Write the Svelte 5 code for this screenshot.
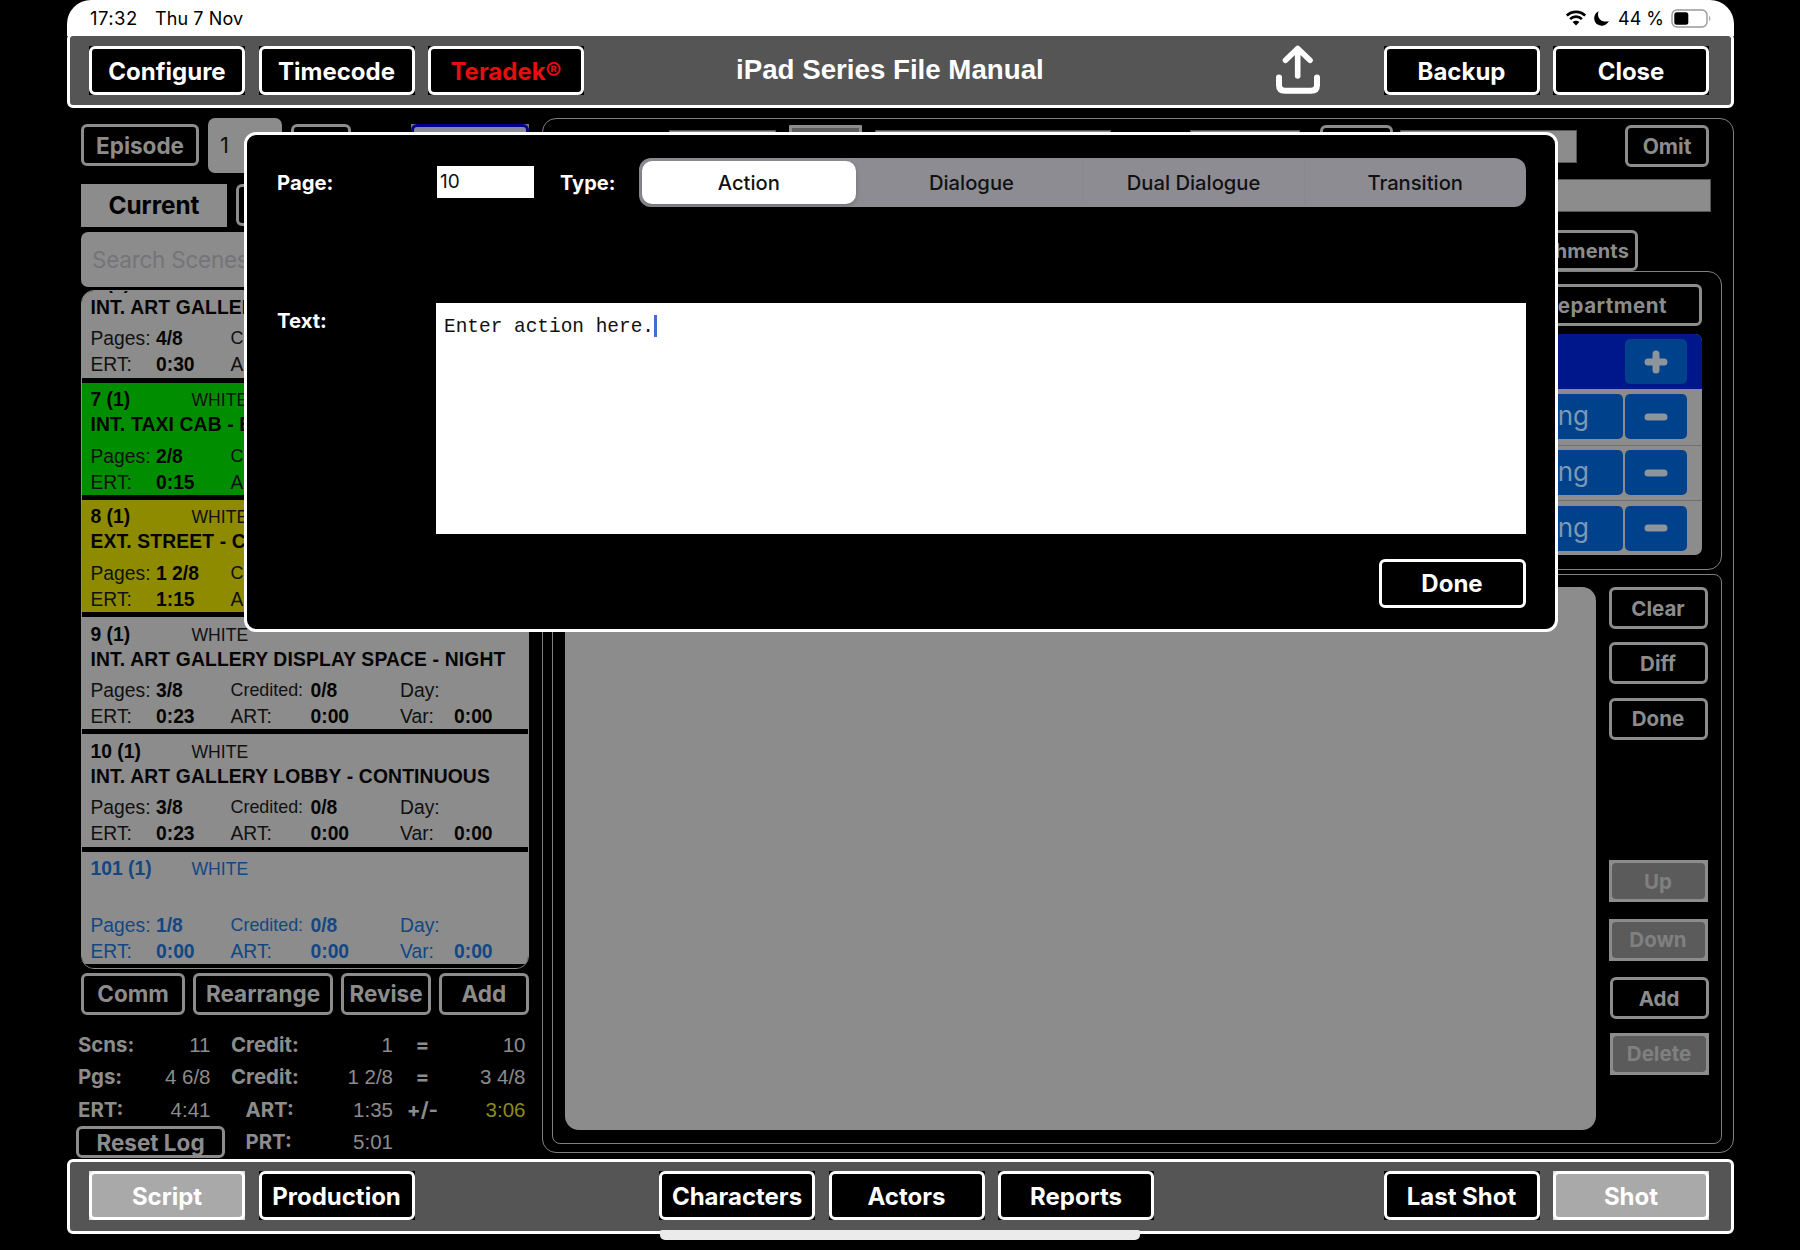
<script>
  const scenes = [
    { no: '6 (1)', tone: 'plain', title: 'INT. ART GALLERY', pages: '4/8', ert: '0:30' },
    { no: '7 (1)', tone: 'green', title: 'INT. TAXI CAB - EVENING', pages: '2/8', ert: '0:15' },
    { no: '8 (1)', tone: 'yellow', title: 'EXT. STREET - CONTINUOUS', pages: '1 2/8', ert: '1:15' },
    { no: '9 (1)', tone: 'plain', title: 'INT. ART GALLERY DISPLAY SPACE - NIGHT', pages: '3/8', ert: '0:23' },
    { no: '10 (1)', tone: 'plain', title: 'INT. ART GALLERY LOBBY - CONTINUOUS', pages: '3/8', ert: '0:23' },
    { no: '101 (1)', tone: 'blue', title: '', pages: '1/8', ert: '0:00' }
  ];
  const stats = [
    ['Scns:', '11', 'Credit:', '1', '=', '10'],
    ['Pgs:', '4 6/8', 'Credit:', '1 2/8', '=', '3 4/8'],
    ['ERT:', '4:41', 'ART:', '1:35', '+/-', '3:06']
  ];
  const types = ['Action', 'Dialogue', 'Dual Dialogue', 'Transition'];
  let active = $state('Action');
</script>

<div class="device">
  <div class="status">
    <span class="time">17:32</span><span class="date">Thu 7 Nov</span>
    <span class="grow"></span>
    <svg class="wifi" width="22" height="16" viewBox="0 0 22 16">
      <path d="M1.8 5.6a13.2 13.2 0 0 1 18.4 0M5.1 9.1a8.5 8.5 0 0 1 11.8 0" fill="none" stroke="#000" stroke-width="2.7" />
      <path d="M11 15.6 7.6 12a4.9 4.9 0 0 1 6.8 0z" />
    </svg>
    <svg class="moon" width="15" height="15" viewBox="0 0 15 15"><path d="M4.600 .2C-1 2.800 -1.200 10.600 3.600 13.600 7.600 16 12.800 14.400 14.900 10 7.600 12.200 2.200 7 4.600 .2z" /></svg>
    <span class="pct">44 %</span>
    <svg class="battery" width="41" height="19" viewBox="0 0 41 19">
      <rect x="1" y="1" width="35" height="17" rx="5" fill="none" stroke="#999" stroke-width="1.4" />
      <rect x="3.300" y="3.300" width="14" height="12.400" rx="2.500" />
      <path d="M38.200 6.500q2.400 3 0 6z" fill="#999" />
    </svg>
  </div>

  <header class="bar">
    <button class="btn">Configure</button>
    <button class="btn">Timecode</button>
    <button class="btn red">Teradek®</button>
    <h1>iPad Series File Manual</h1>
    <svg class="upload" width="44" height="50" viewBox="0 0 44 50" fill="none" stroke="#fff" stroke-linecap="round" stroke-linejoin="round">
      <path d="M21.700 31V4M9.500 15.300 21.700 3.500 34 15.300" stroke-width="5.600" />
      <path d="M3 32.500V40q0 5.800 6 5.800H35q6 0 6-5.800V32.500" stroke-width="6" />
    </svg>
    <button class="btn">Backup</button>
    <button class="btn">Close</button>
  </header>

  <main>
    <section class="left">
      <div class="episode">
        <button class="gbtn ep">Episode</button>
        <div class="epno">1</div>
        <button class="gbtn epx" aria-label="Episode options"></button>
        <div class="pickedbox"><div class="picked"></div></div>
      </div>
      <div class="tabs"><div class="current">Current</div><button class="gbtn other" aria-label="Other scenes"></button></div>
      <div class="search">Search Scenes</div>
      <div class="list">
        {#each scenes as s}
          <article class={s.tone}>
            <div class="head"><b>{s.no}</b><span>WHITE</span></div>
            <div class="title">{s.title}</div>
            <div class="cells">
              <span>Pages:</span><b>{s.pages}</b><span class="sm">Credited:</span><b>0/8</b><span>Day:</span><b></b>
            </div>
            <div class="cells">
              <span>ERT:</span><b>{s.ert}</b><span>ART:</span><b>0:00</b><span>Var:</span><b>0:00</b>
            </div>
          </article>
        {/each}
      </div>
      <div class="actions">
        <button class="gbtn">Comm</button><button class="gbtn">Rearrange</button><button class="gbtn">Revise</button><button class="gbtn">Add</button>
      </div>
      <div class="stats">
        {#each stats as r, i}
          <b>{r[0]}</b><span>{r[1]}</span><b class="mid" class:indent={i === 2}>{r[2]}</b><span>{r[3]}</span><b class="op">{r[4]}</b><span class:late={i === 2}>{r[5]}</span>
        {/each}
        <button class="gbtn reset">Reset Log</button><b class="mid indent">PRT:</b><span>5:01</span>
      </div>
    </section>

    <section class="right">
      <div class="form1">
        <i class="field w1"></i><i class="dim"></i><i class="field w2"></i><i class="field w3"></i>
        <button class="gbtn w4" aria-label="Scene option"></button><i class="field w5"></i>
        <button class="gbtn omit">Omit</button>
      </div>
      <div class="form2"><i class="field"></i></div>
      <div class="tabrow"><button class="gbtn">Attachments</button></div>
      <div class="panel breakdown">
        <button class="gbtn dept">Department</button>
        <div class="table">
          <div class="thead">
            <div class="sq"><svg width="24" height="24" viewBox="0 0 24 24"><path d="M12 4V20M4 12H20" /></svg></div>
          </div>
          {#each [1, 2, 3] as n}
            <div class="trow">
              <div class="missing">Missing</div>
              <div class="sq"><svg width="24" height="24" viewBox="0 0 24 24"><path d="M4 12H20" /></svg></div>
            </div>
          {/each}
        </div>
      </div>
      <div class="panel script">
        <div class="paper"></div>
        <div class="side">
          <button class="gbtn">Clear</button>
          <button class="gbtn">Diff</button>
          <button class="gbtn">Done</button>
          <button class="gbtn off up">Up</button>
          <button class="gbtn off down">Down</button>
          <button class="gbtn add">Add</button>
          <button class="gbtn off del">Delete</button>
        </div>
      </div>
    </section>
  </main>

  <footer class="bar">
    <button class="btn lit">Script</button>
    <button class="btn">Production</button>
    <button class="btn chars">Characters</button>
    <button class="btn">Actors</button>
    <button class="btn">Reports</button>
    <button class="btn last">Last Shot</button>
    <button class="btn lit">Shot</button>
  </footer>

  <div class="home"></div>

  <div class="modal">
    <div class="mrow">
      <span class="mlabel">Page:</span>
      <div class="page">10</div>
      <span class="tlabel">Type:</span>
      <div class="segments">
        {#each types as t}
          <button class:on={active === t} onclick={() => (active = t)}>{t}</button>
        {/each}
      </div>
    </div>
    <div class="mtext">
      <span class="mlabel">Text:</span>
      <div class="area">Enter action here.<i class="caret"></i></div>
    </div>
    <button class="gbtn done">Done</button>
  </div>
</div>

<style>
  :global(body) { background: #000; overflow: hidden; }
  * { box-sizing: border-box; }
  button { margin: 0; padding: 0; font-family: inherit; white-space: nowrap; }
  .device {
    position: relative; width: 1667px; height: 1250px; margin-left: 67px; color: #8c8c8c;
    font-family: Inter, 'Liberation Sans', sans-serif; display: flex; flex-direction: column;
  }
  .status {
    height: 36px; margin-bottom: -3px; flex: none; background: #fff; color: #000; display: flex; align-items: center;
    padding: 0 22px 0 23px; font-size: 18px; border-radius: 24px 24px 0 0;
  }
  .time { width: 65px; font-size: 18.500px; letter-spacing: .45px; }
  .date { letter-spacing: .1px; }
  .grow { flex: 1; }
  .wifi { margin-right: 7px; }
  .moon { margin-right: 9px; }
  .pct { width: 53px; }
  .bar {
    height: 75px; flex: none; border: 3px solid #fff; border-radius: 6px; background: #555;
    display: flex; align-items: center; gap: 13.500px; padding: 1px 22px 0 19px;
  }
  header.bar { height: 74.500px; margin-bottom: .5px; }
  .btn {
    position: relative; isolation: isolate; width: 156px; height: 49px; flex: none; border: 0; background: #000; color: #fff;
    font-size: 24px; font-weight: 700; letter-spacing: 0; padding-top: 2px;
  }
  .btn::before { content: ''; position: absolute; z-index: -1; inset: 0; border: 3px solid #fff; border-radius: 6px; }
  .btn.red { color: #e80d10; }
  .btn.lit { background: #dcdcdc; }
  .btn.lit::before { background: #a9a9a9; }
  h1 {
    margin: 0 0 0 138.500px; width: 308px; font: bold 27.700px 'Liberation Sans', Arial, sans-serif;
    color: #fff; white-space: nowrap; position: relative; top: -1px;
  }
  .upload { margin: 0 50px 2px auto; flex: none; }
  main { height: 1051px; flex: none; display: flex; }
  footer.bar { height: 75px; padding: 0 22px 2px 19px; }
  .chars { margin-left: 231px; }
  .last { margin-left: auto; }
  .home {
    position: absolute; left: 593px; top: 1230px; width: 480px; height: 10px; background: #ebebeb; border-radius: 2px 2px 5px 5px;
  }

  .gbtn {
    height: 42px; border: 3px solid #8c8c8c; border-radius: 6px; background: #000; color: #8c8c8c;
    font-size: 22.500px; font-weight: 700; flex: none;
  }
  .left { width: 475px; flex: none; padding: 9.500px 0 0 14px; }
  .episode { display: flex; height: 55px; align-items: center; }
  .ep { width: 118px; margin-right: 9px; }
  .epno {
    width: 74px; height: 55px; border-radius: 7px; background: #8c8c8c; color: #111; font-size: 22px;
    padding: 13px 0 0 12px; line-height: 28px; margin-right: 9px;
  }
  .epx { width: 60px; margin-right: 60px; }
  .pickedbox { width: 118px; height: 42px; background: #77777c; }
  .picked { height: 42px; border: 3px solid #00008b; border-radius: 6px; background: #88889a; }
  .tabs { display: flex; margin-top: 11px; gap: 9px; }
  .current {
    width: 146px; height: 43px; background: #8c8c8c; color: #000; font-size: 24.300px; font-weight: 700;
    text-align: center; line-height: 43px;
  }
  .other { width: 120px; }
  .search {
    width: 448px; height: 55px; margin-top: 5px; border-radius: 7px; background: #8c8c8c; color: #747478;
    font-size: 22.500px; line-height: 55px; padding-left: 11px; letter-spacing: -.25px;
  }
  .list {
    width: 448px; height: 679px; margin-top: 3px; border: solid #8c8c8c; border-width: 1px 1.500px 1px; border-radius: 13px; overflow: hidden;
    display: flex; flex-direction: column; justify-content: flex-end;
    font: 19.300px 'Liberation Sans', Arial, sans-serif; color: #111; background: #000;
  }
  article { height: 117.300px; flex: none; border-bottom: 5px solid #000; padding: 3.500px 0 0 8.500px; background: #8c8c8c; }
  article:last-child { margin-bottom: -1.500px; }
  article b { font-weight: 700; color: #050505; }
  article.green { background: #008e00; }
  article.yellow { background: #8e8b00; }
  article.blue, article.blue b { color: #124784; }
  .head { display: flex; height: 27px; line-height: 28px; }
  .head b { width: 101px; }
  .head span { font-size: 17.600px; }
  .title { height: 32.500px; line-height: 23px; font-weight: 700; white-space: nowrap; letter-spacing: .15px; color: #050505; }
  .cells { display: grid; grid-template-columns: 65.500px 74.500px 80px 89.500px 54px 70px; height: 26px; line-height: 21px; white-space: nowrap; }
  .sm { font-size: 17.900px; }
  .actions { display: flex; gap: 8px; margin-top: 4px; }
  .actions button:nth-child(1) { width: 104px; }
  .actions button:nth-child(2) { width: 140px; }
  .actions button:nth-child(3) { width: 90px; }
  .actions button:nth-child(4) { width: 89.500px; }
  .stats {
    display: grid; grid-template-columns: 60px 72.500px 90.500px 92px 50px 82.500px;
    grid-auto-rows: 32.600px; margin: 14px 0 0 -3px; width: 451px; line-height: 32.600px; font-size: 20.400px;
  }
  .stats b { font-weight: 700; white-space: nowrap; }
  .stats span { font-family: 'Liberation Sans', Arial, sans-serif; font-size: 20.500px; text-align: right; white-space: nowrap; }
  .mid { padding-left: 20.500px; }
  .indent { padding-left: 35px; }
  .op { text-align: center; padding-left: 9px; }
  .stats .late { color: #8b8b1c; }
  .reset { grid-column: span 2; width: 149px; height: 32px; margin-left: -2px; line-height: 25px; }

  .right { width: 1192px; height: 1035px; margin-top: 10px; border: 1.500px solid #808080; border-radius: 14px; padding: 6px 11px 0 8.500px; display: flex; flex-direction: column; }
  .form1 { display: flex; height: 44px; padding-left: 117px; align-items: flex-start; }
  .field { display: block; height: 33px; margin-top: 5px; background: #8c8c8c; border: 1.500px solid #555; flex: none; }
  .w1 { width: 107px; }
  .dim { width: 73px; height: 43px; margin: 0 13px 0 13.500px; border: 3px solid #8c8c8c; border-radius: 1px; background: #5c5c5c; flex: none; }
  .w2 { width: 236px; }
  .w3 { width: 110px; margin-left: 79px; }
  .w4 { width: 73px; margin: 0 7px 0 20px; }
  .w5 { width: 177px; }
  .omit { width: 84px; margin: 0 0 0 48px; font-size: 21px; }
  .form2 { display: flex; justify-content: flex-end; padding-right: 11px; margin-top: 4.500px; }
  .form2 .field { width: 400px; }
  .tabrow { display: flex; justify-content: flex-end; margin-top: 18.500px; padding-right: 84px; height: 41px; }
  .tabrow .gbtn { width: 170px; font-size: 20px; height: 41px; letter-spacing: .15px; text-align: right; padding-right: 6px; }
  .panel { border: 1.500px solid #808080; }
  .breakdown { height: 299px; border-radius: 14px; background: #000; padding: 12px 19px 0 0; display: flex; flex-direction: column; align-items: flex-end; }
  .dept { width: 200px; font-size: 20.500px; letter-spacing: .5px; text-align: right; padding-right: 32px; }
  .table { width: 700px; height: 221px; margin-top: 8px; border-radius: 0 7px 7px 0; overflow: hidden; background: #8c8c8c; flex: none; }
  .thead, .trow { display: flex; justify-content: flex-end; align-items: center; gap: 2px; padding-right: 15px; height: 55.300px; }
  .thead { background: #00178b; }
  .trow + .trow { border-top: 1px solid #707074; }
  .sq { width: 62px; height: 45px; border-radius: 5px; background: #00418c; display: grid; place-items: center; }
  .sq path { stroke: #8c949c; stroke-width: 7; stroke-linecap: round; fill: none; }
  .missing { width: 160px; height: 45px; border-radius: 5px; background: #00418c; color: #7f98b4; font-size: 26px; line-height: 44px; text-align: right; padding-right: 34px; }
  .script { height: 570px; margin-top: 4px; border-radius: 8px; display: flex; padding: 12px 0 0 12px; }
  .paper { width: 1031.500px; height: 543px; border-radius: 14px; background: #8c8c8c; flex: none; }
  .side { margin-left: 12.500px; display: flex; flex-direction: column; gap: 13.400px; }
  .side .gbtn { width: 99px; font-size: 20.500px; }
  .gbtn.off { position: relative; isolation: isolate; border: 0; border-radius: 0; background: #8c8c8c; color: #808080; }
  .off::before { content: ''; position: absolute; z-index: -1; inset: 3px; border-radius: 4px; background: #5b5b5b; }
  .up { margin-top: 107px; }
  .side .down { margin-top: 3px; }
  .side .add { margin: 3.500px 0 0 1px; }
  .side .del { margin-left: 1px; }

  .modal {
    position: absolute; left: 177px; top: 132px; width: 1314px; height: 500px; border: 3px solid #fff; border-radius: 12px;
    background: #000; color: #fff; padding: 23px 29.500px 0 30px; display: flex; flex-direction: column;
  }
  .mrow { display: flex; height: 49px; align-items: center; }
  .mlabel { width: 160px; font-size: 20.300px; font-weight: 700; flex: none; }
  .page { width: 97px; height: 32px; background: #fff; color: #111; font-size: 19px; line-height: 32px; padding-left: 3px; margin-bottom: 1px; }
  .tlabel { width: 79px; margin-left: 26px; font-size: 20px; font-weight: 700; }
  .segments { flex: 1; height: 49px; border-radius: 12px; background: #8d8c92; display: grid; grid-template-columns: repeat(4, 1fr); padding: 3px 0; }
  .segments button { border: 0; background: none; font-size: 20.200px; font-weight: 500; color: #111; letter-spacing: 0; }
  .segments button + button + button { border-left: 1px solid #89888e; }
  .segments .on { background: #fff; margin: 0 5px 0 3px; border-radius: 10px; box-shadow: 0 2px 5px #0003; }
  .mtext { display: flex; margin-top: 96px; height: 231px; }
  .mtext .mlabel { width: 159px; padding-top: 5px; }
  .area { flex: 1; background: #fff; color: #111; font: 19.450px/24px 'Liberation Mono', 'Courier New', monospace; padding: 12px 8px; }
  .caret { display: inline-block; width: 3px; height: 22px; background: #3f6fd0; vertical-align: -5px; }
  .done { align-self: flex-end; width: 147px; height: 49px; margin-top: 25px; border-color: #fff; color: #fff; font-size: 24px; }
</style>
